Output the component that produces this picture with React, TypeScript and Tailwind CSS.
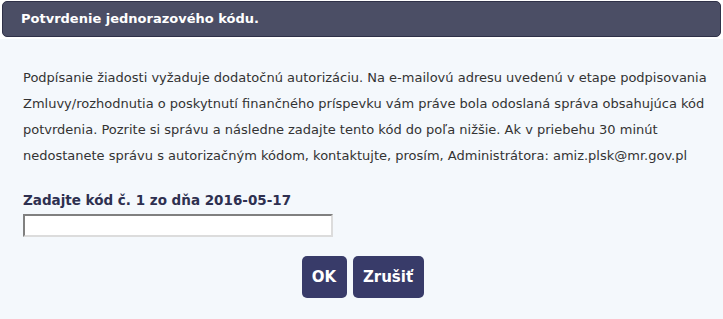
import React from "react";

const lines = [
  "Podpísanie žiadosti vyžaduje dodatočnú autorizáciu. Na e-mailovú adresu uvedenú v etape podpisovania",
  "Zmluvy/rozhodnutia o poskytnutí finančného príspevku vám práve bola odoslaná správa obsahujúca kód",
  "potvrdenia. Pozrite si správu a následne zadajte tento kód do poľa nižšie. Ak v priebehu 30 minút",
  "nedostanete správu s autorizačným kódom, kontaktujte, prosím, Administrátora: amiz.plsk@mr.gov.pl",
];

const App = () => {
  return (
    <div className="w-[723px] h-[319px] bg-[#f4f8fc] font-['DejaVu_Sans',Verdana,sans-serif] overflow-hidden">
      {/* Header bar */}
      <div className="bg-white pt-px px-[2px] pb-[2px]">
        <div className="h-[36px] flex items-center pl-[18px] bg-[#4b4e65] border border-[#2f3148] rounded-[5px]">
          <h3 className="text-white font-bold text-[13px]">Potvrdenie jednorazového kódu.</h3>
        </div>
      </div>

      {/* Message */}
      <div className="pl-[23px] pt-[26px] text-[13px] leading-[26px] text-[#333333]">
        {lines.map((line) => (
          <div key={line} className="whitespace-nowrap">
            {line}
          </div>
        ))}
      </div>

      {/* Code input */}
      <div className="pl-[23px] pt-[22px]">
        <div className="text-[13.5px] font-bold text-[#2e3050] leading-[18px]">
          Zadajte kód č. 1 zo dňa 2016-05-17
        </div>
        <input
          type="text"
          className="mt-[5px] block w-[310px] h-[23px] bg-white border-2 border-t-[#808080] border-l-[#808080] border-b-[#dcdcdc] border-r-[#dcdcdc] outline-none"
        />
      </div>

      {/* Buttons */}
      <div className="flex justify-center gap-[6px] pt-[19px] pl-[2px]">
        <button className="h-[42px] w-[45px] rounded-[5px] bg-[#383b69] text-white font-bold text-[15px]">
          OK
        </button>
        <button className="h-[42px] w-[71px] rounded-[5px] bg-[#383b69] text-white font-bold text-[15px]">
          Zrušiť
        </button>
      </div>
    </div>
  );
};

export default App;
